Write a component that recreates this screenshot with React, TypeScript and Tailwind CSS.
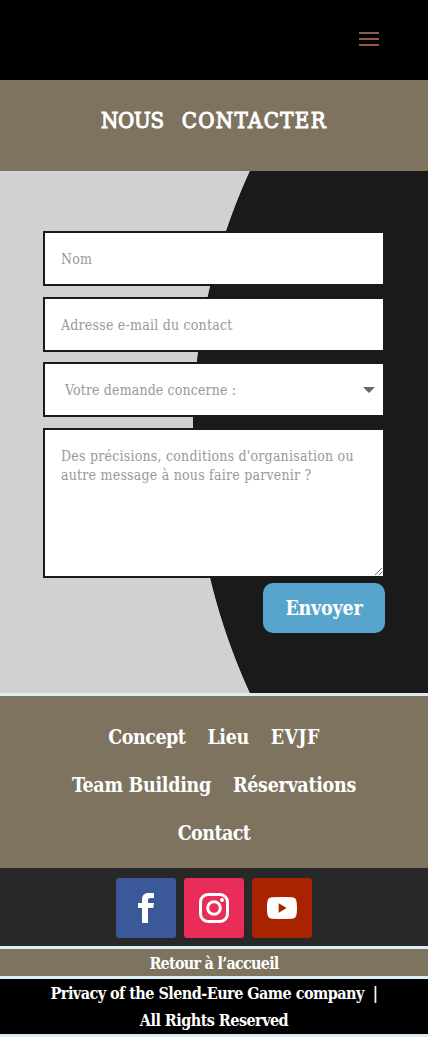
import type { ReactNode } from 'react';

const slab = "font-['Roboto_Slab','DejaVu_Serif_Condensed','DejaVu_Serif',serif] [font-stretch:condensed]";
const field = 'w-full rounded-none border-2 border-[#1a1a1a] bg-white text-[#999] text-[14px] tracking-[0.23px] outline-none placeholder:text-[#999] placeholder:opacity-100';

function MenuIcon() {
  return (
    <svg width="22" height="16" viewBox="0 0 22 16" fill="#8f5a4a" aria-hidden="true">
      <rect x="1" y="1" width="20" height="2" />
      <rect x="1" y="7" width="20" height="2" />
      <rect x="1" y="13" width="20" height="2" />
    </svg>
  );
}

function ContactForm() {
  return (
    <form className="flex h-[522px] flex-col bg-[radial-gradient(circle_at_819px_261px,#1a1a1a_625.7px,#d1d1d1_626.5px)] px-[43px] pt-[60px]">
      <input className={`${field} mb-[11px] h-[55px] px-4 pt-px`} placeholder="Nom" />
      <input className={`${field} mb-[10px] h-[55px] px-4 pt-px`} placeholder="Adresse e-mail du contact" />
      <div className={`${field} mb-[11px] flex h-[55px] items-center justify-between pr-2 pl-5`}>
        <span className="pt-0.5 tracking-[0.15px]">Votre demande concerne :</span>
        <svg width="12" height="6" viewBox="0 0 12 6" fill="#666" aria-hidden="true"><path d="M0 0h12L6 6z" /></svg>
      </div>
      <textarea
        className={`${field} block h-[150px] resize-y pt-[17px] pr-4 pb-4 pl-4 leading-[19px] tracking-[0.15px]`}
        placeholder="Des précisions, conditions d'organisation ou autre message à nous faire parvenir ?"
      />
      <button type="button" className="mt-[5px] h-[50px] w-[122px] self-end rounded-[10px] bg-[#57a5cc] pt-0.5 text-[19.5px] font-bold tracking-[-0.2px] text-white">
        Envoyer
      </button>
    </form>
  );
}

function FooterNav() {
  return (
    <nav className="flex h-[175px] flex-col border-t-[3px] border-[#dcecf5] bg-[#7e735f] pt-[18px] text-center text-[19.5px] leading-[48px] font-bold tracking-[-0.3px] text-white">
      <div className="flex justify-center gap-[22px]">
        <a className="tracking-[-0.5px]">Concept</a>
        <a className="tracking-[-0.4px]">Lieu</a>
        <a className="tracking-[0.3px]">EVJF</a>
      </div>
      <div className="flex justify-center gap-[22px]"><a>Team Building</a><a>Réservations</a></div>
      <div><a className="tracking-[-0.6px]">Contact</a></div>
    </nav>
  );
}

function Tile({ color, children }: { color: string; children: ReactNode }) {
  return <a className={`flex h-[60px] w-[60px] items-center justify-center rounded-[3px] ${color}`}>{children}</a>;
}

function Social() {
  return (
    <div className="flex h-[78px] justify-center gap-2 bg-[#282828] pt-[10px] text-white">
      <Tile color="bg-[#3b5998]">
        <svg width="16" height="30" viewBox="0 0 16 30" fill="currentColor" aria-hidden="true">
          <path d="M4 30V15H0v-5h4V7c0-4.500 2.200-7 6.500-7H16v5h-3.300C10.500 5 10 6 10 7.600V10h6l-.7 5H10v15z" />
        </svg>
      </Tile>
      <Tile color="bg-[#ea2c59]">
        <svg width="30" height="30" viewBox="0 0 30 30" fill="none" stroke="currentColor" aria-hidden="true">
          <rect x="1.5" y="1.5" width="27" height="27" rx="7.5" strokeWidth="3" />
          <circle cx="15" cy="15" r="6.3" strokeWidth="3" />
          <circle cx="23" cy="7" r="2" fill="currentColor" stroke="none" />
        </svg>
      </Tile>
      <Tile color="bg-[#a82400]">
        <svg width="30" height="22" viewBox="0 0 30 22" aria-hidden="true">
          <path d="M5 .3Q15-.3 25 .3C29 .5 30 3 30 11s-1 10.500-5 10.700Q15 22.300 5 21.700C1 21.500 0 19 0 11S1 .5 5 .3z" fill="currentColor" />
          <path d="M11.700 6.300v9.400l8-4.700z" fill="#a82400" />
        </svg>
      </Tile>
    </div>
  );
}

export default function App() {
  return (
    <div className={`w-full overflow-hidden ${slab}`}>
      <header className="flex h-20 justify-end bg-black pt-[31px] pr-12"><MenuIcon /></header>
      <h1 className="flex h-[91px] justify-center gap-[18px] bg-[#7e735f] pt-[23px] text-[22px] leading-[36px] font-normal text-white [-webkit-text-stroke:1px_white]">
        <span className="tracking-[-0.3px]">NOUS</span> <span className="tracking-[1.4px]">CONTACTER</span>
      </h1>
      <ContactForm />
      <FooterNav />
      <Social />
      <div className="h-[30px] border-t-[3px] border-[#dcecf5] bg-[#7e735f] text-center text-[16px] leading-[29px] font-bold tracking-[-0.75px] text-white">Retour à l’accueil</div>
      <footer className="h-[61px] border-y-[3px] border-[#dcecf5] bg-black pt-px text-center text-[16px] leading-[27px] font-bold tracking-[-0.53px] text-white">
        <div className="whitespace-pre">Privacy of the Slend-Eure Game company  |</div>
        <div>All Rights Reserved</div>
      </footer>
    </div>
  );
}
